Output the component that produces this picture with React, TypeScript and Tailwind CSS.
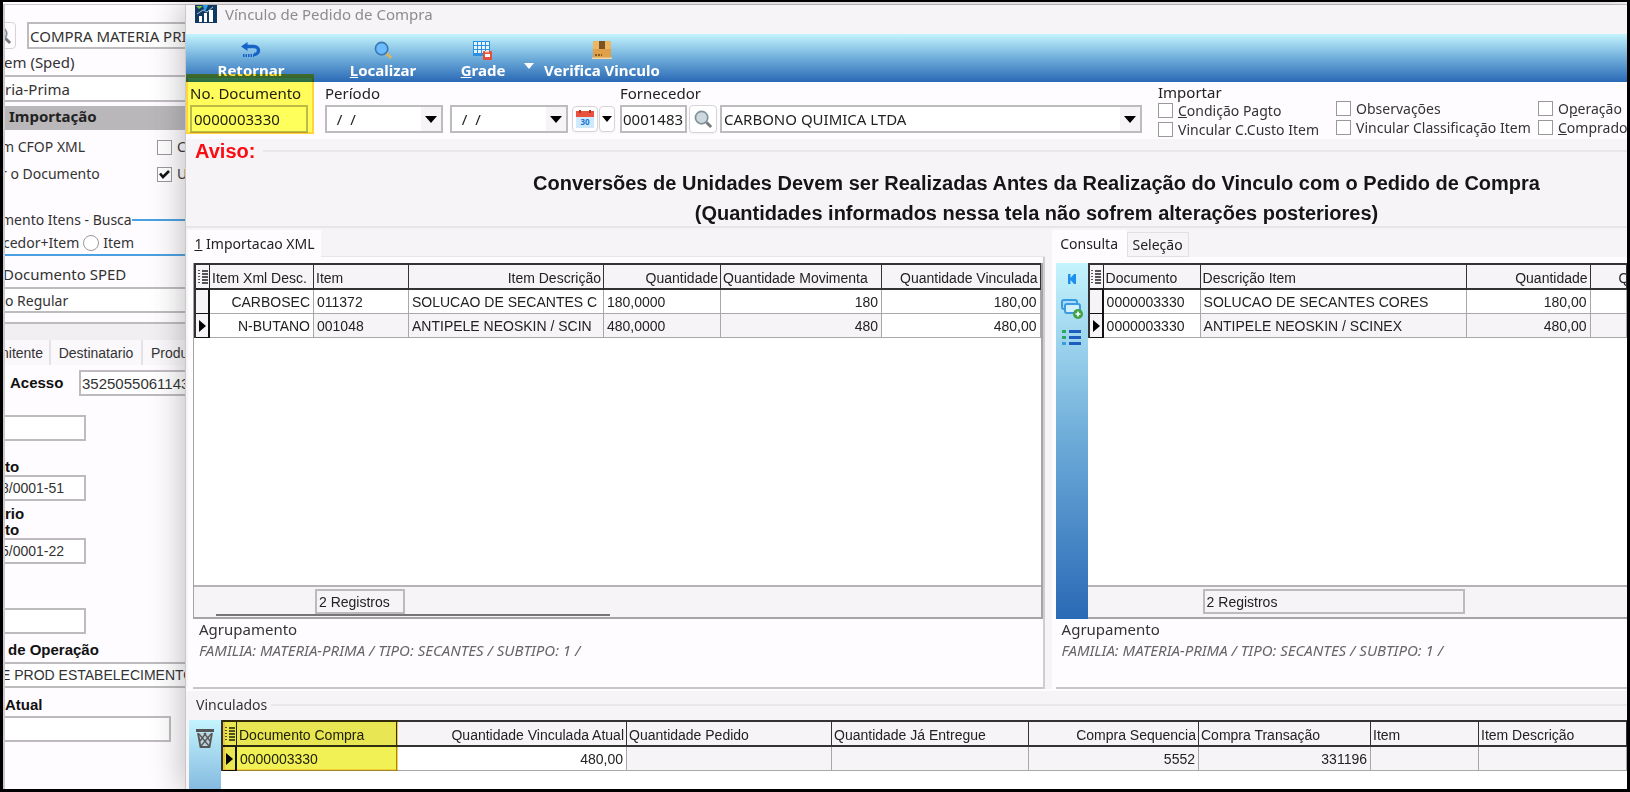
import { useState } from "react";
import type { ReactNode } from "react";
import clsx from "clsx";

type Column = {
  label: string;
  width: string;
  headAlign?: string;
  cellAlign?: string;
  shaded?: boolean;
};

const gridFont = "font-['Liberation_Sans',sans-serif]";
const fieldFont = "font-['Noto_Sans','Open_Sans',sans-serif]";

const itemColumns: Column[] = [
  { label: "Item Xml Desc.", width: "w-[104px]", cellAlign: "text-right" },
  { label: "Item", width: "w-[95px]", shaded: true },
  { label: "Item Descrição", width: "w-[195px]", headAlign: "text-right", shaded: true },
  { label: "Quantidade", width: "w-[117px]", headAlign: "text-right", shaded: true },
  { label: "Quantidade Movimenta", width: "w-[161px]", cellAlign: "text-right", shaded: true },
  { label: "Quantidade Vinculada", width: "w-auto", headAlign: "text-right", cellAlign: "text-right" },
];

const itemRows = [
  ["CARBOSEC", "011372", "SOLUCAO DE SECANTES C", "180,0000", "180", "180,00"],
  ["N-BUTANO", "001048", "ANTIPELE NEOSKIN / SCIN", "480,0000", "480", "480,00"],
];

const orderColumns: Column[] = [
  { label: "Documento", width: "w-[97px]" },
  { label: "Descrição Item", width: "w-[266px]", shaded: true },
  { label: "Quantidade", width: "w-[124px]", headAlign: "text-right", cellAlign: "text-right", shaded: true },
  { label: "Quantidade", width: "w-auto", headAlign: "pl-7 text-left", shaded: true },
];

const orderRows = [
  ["0000003330", "SOLUCAO DE SECANTES CORES", "180,00", ""],
  ["0000003330", "ANTIPELE NEOSKIN / SCINEX", "480,00", ""],
];

const linkedColumns: Column[] = [
  { label: "Documento Compra", width: "w-[160px]" },
  { label: "Quantidade Vinculada Atual", width: "w-[230px]", headAlign: "text-right", cellAlign: "text-right" },
  { label: "Quantidade Pedido", width: "w-[205px]", shaded: true },
  { label: "Quantidade Já Entregue", width: "w-[197px]", shaded: true },
  { label: "Compra Sequencia", width: "w-[170px]", headAlign: "text-right", cellAlign: "text-right", shaded: true },
  { label: "Compra Transação", width: "w-[172px]", cellAlign: "text-right", shaded: true },
  { label: "Item", width: "w-[108px]", shaded: true },
  { label: "Item Descrição", width: "w-auto", shaded: true },
];

const linkedRows = [["0000003330", "480,00", "", "", "5552", "331196", "", ""]];

function GridMenuIcon() {
  return (
    <svg viewBox="0 0 10 14" className="mx-auto h-3.5 w-2.5" fill="#555">
      {[0, 3, 6, 9, 12].map((y) => (
        <g key={y}>
          <rect x="0" y={y} width="2" height="1" />
          <rect x="4" y={y} width="6" height="2" />
        </g>
      ))}
    </svg>
  );
}

function DataGrid({ columns, rows, active }: { columns: Column[]; rows: string[][]; active: number }) {
  return (
    <table className={clsx("w-full table-fixed border-separate border-spacing-0 border-t-2 border-l-2 border-[#333] text-sm text-[#222]", gridFont)}>
      <thead>
        <tr>
          <th className="h-[25px] w-[14px] border-r border-b-2 border-[#222] bg-[#f7f4f8] p-0">
            <GridMenuIcon />
          </th>
          {columns.map((col, i) => (
            <th
              key={i}
              className={clsx(
                "h-[25px] overflow-hidden border-r border-b-2 border-[#333] bg-[#f7f4f8] px-0.5 pt-0.5 pb-0 font-normal whitespace-nowrap",
                col.width,
                col.headAlign ?? "text-left"
              )}
            >
              {col.label}
            </th>
          ))}
        </tr>
      </thead>
      <tbody>
        {rows.map((row, r) => (
          <tr key={r}>
            <td className="h-6 border-r-2 border-b border-[#111] bg-[#f7f4f8] p-0">
              {r === active && (
                <svg viewBox="0 0 8 12" className="mx-auto h-3 w-2" fill="#000">
                  <path d="M1 0l7 6-7 6z" />
                </svg>
              )}
            </td>
            {row.map((cell, c) => (
              <td
                key={c}
                className={clsx(
                  "h-6 overflow-hidden border-r border-b border-[#a9a7aa] px-[3px] py-0 whitespace-nowrap",
                  columns[c].cellAlign,
                  r === active && columns[c].shaded ? "bg-[#f7f4f8]" : "bg-white"
                )}
              >
                {cell}
              </td>
            ))}
          </tr>
        ))}
      </tbody>
    </table>
  );
}

function Combo({ label, value, className }: { label: string; value: string; className: string }) {
  return (
    <div className={clsx("relative", className)}>
      <select
        aria-label={label}
        className={clsx("h-7 w-full appearance-none border-2 border-[#bdbbbe] bg-white px-0.5 text-[15px] text-[#222]", fieldFont)}
      >
        <option>{value}</option>
      </select>
      <span className="pointer-events-none absolute inset-y-0.5 right-0.5 flex w-5 items-center justify-center bg-[#f7f4f8]">
        <svg viewBox="0 0 12 7" className="h-[7px] w-3">
          <path d="M0 0h12L6 7z" />
        </svg>
      </span>
    </div>
  );
}

function Check({ children, defaultChecked }: { children: ReactNode; defaultChecked?: boolean }) {
  return (
    <label className="flex h-[19px] items-center gap-[5px] text-sm whitespace-nowrap text-[#333]">
      <span className="relative flex shrink-0">
        <input
          type="checkbox"
          defaultChecked={defaultChecked}
          className="peer size-[15px] appearance-none border border-[#999] bg-white"
        />
        <svg
          viewBox="0 0 15 15"
          className="pointer-events-none absolute inset-0 hidden size-[15px] peer-checked:block"
          fill="none"
          stroke="#111"
          strokeWidth="2.6"
        >
          <path d="M3 6.5l3 3.5 6-6" />
        </svg>
      </span>
      <span>{children}</span>
    </label>
  );
}

function Lens({ glass, ring, handle }: { glass: string; ring: string; handle: string }) {
  return (
    <svg viewBox="0 0 20 20" className="size-[19px]" fill="none">
      <path d="M13 13l5 5" stroke={handle} strokeWidth="3" />
      <circle cx="8" cy="8" r="6.5" fill={glass} stroke={ring} strokeWidth="1.8" />
    </svg>
  );
}

function ToolButton({ icon, children, className }: { icon: ReactNode; children: ReactNode; className: string }) {
  return (
    <button className={clsx("flex h-full flex-col items-center pt-1.5 text-[15px] leading-5 font-bold whitespace-nowrap text-white", className)}>
      <span className="flex h-5 items-center">{icon}</span>
      <span>{children}</span>
    </button>
  );
}

function Toolbar() {
  return (
    <div className="flex h-12 bg-linear-to-b from-[#c4f4fd] via-[#70aeda] to-[#2a69b5] pl-4">
      <ToolButton
        className="w-[98px]"
        icon={
          <svg viewBox="0 0 20 18" className="h-[18px] w-5" fill="none" stroke="#1763c6">
            <path d="M4 5.500h9a4.500 4 0 0 1 0 8" strokeWidth="3.400" />
            <path d="M0 5.500L6.500 1v9z" fill="#1763c6" stroke="none" />
            <path d="M2 14.500h11" strokeWidth="3" strokeDasharray="1.500 1" />
          </svg>
        }
      >
        Retornar
      </ToolButton>
      <ToolButton className="ml-[34px] w-[98px]" icon={<Lens glass="#6bbcff" ring="#3c79b0" handle="#d8b45c" />}>
        <u>L</u>ocalizar
      </ToolButton>
      <ToolButton
        className="ml-[26px] w-[50px]"
        icon={
          <svg viewBox="0 0 20 20" className="size-5">
            <rect x="0" y="1" width="17" height="15" fill="#2f8fe0" />
            {[2, 6, 10].map((y) =>
              [1, 5, 9, 13].map((x) => <rect key={`${x}-${y}`} x={x} y={y} width="3" height="3" fill="#e8f6ff" />)
            )}
            <rect x="10" y="11" width="9" height="9" rx="1" fill="#e2503a" />
            <rect x="12" y="14" width="5" height="3" fill="#fff" />
            <rect x="12" y="11" width="4" height="1.500" fill="#ffd2c8" />
          </svg>
        }
      >
        <u>G</u>rade
      </ToolButton>
      <button aria-label="Opções da grade" className="ml-[11px] flex w-5 items-center justify-center pt-4">
        <svg viewBox="0 0 10 6" className="h-1.5 w-2.5" fill="#fff">
          <path d="M0 0h10L5 6z" />
        </svg>
      </button>
      <ToolButton
        className="ml-1 w-[118px]"
        icon={
          <svg viewBox="0 0 20 18" className="h-[18px] w-5">
            <rect x="1" y="0" width="18" height="17" rx="1.500" fill="#e0a04a" />
            <rect x="1" y="0" width="18" height="8" rx="1.500" fill="#edb662" />
            <rect x="7" y="0" width="6" height="8" fill="#7c5423" />
            <path d="M3 14h7" stroke="#8a5a22" strokeWidth="2" strokeDasharray="2 1" />
            <rect x="0" y="16.500" width="20" height="1.500" fill="#f5d6a0" />
          </svg>
        }
      >
        Verifica Vinculo
      </ToolButton>
    </div>
  );
}

function FilterBar() {
  const smallButton = "flex items-center justify-center rounded border border-[#d6d4d7] bg-white shadow-xs";
  return (
    <div className="flex h-[57px] bg-[#fffcff] pl-1">
      <div className="relative w-[135px]">
        <label htmlFor="documento" className="block h-[23px] text-[15px] leading-[22px] text-[#222]">
          No. Documento
        </label>
        <input
          id="documento"
          defaultValue="0000003330"
          className="h-7 w-[118px] border-2 border-[#bdbbbe] bg-white px-0.5 text-[15px] text-[#222]"
        />
        <div className="pointer-events-none absolute -top-2 -left-1 h-[60px] w-32 border-2 border-t-4 border-[#ffd83a] bg-[#ffff5c] mix-blend-multiply" />
      </div>
      <div>
        <span className="block h-[23px] text-[15px] leading-[22px] text-[#222]">Período</span>
        <div className="flex items-center">
          <Combo label="Período inicial" value="&nbsp; /&nbsp; /" className="w-[118px]" />
          <Combo label="Período final" value="&nbsp; /&nbsp; /" className="ml-[7px] w-[118px]" />
          <button aria-label="Calendário" className={clsx("ml-1 h-[26px] w-[26px]", smallButton)}>
            <svg viewBox="0 0 18 18" className="size-[18px]">
              <rect x="0" y="1" width="18" height="6" fill="#e8513d" />
              <rect x="0" y="7" width="18" height="11" fill="#cfe9fd" />
              <path d="M4 0v3M14 0v3" stroke="#b9301f" strokeWidth="2" />
              <text x="9" y="15" textAnchor="middle" fontSize="8" fontWeight="700" fill="#1976d2">
                30
              </text>
            </svg>
          </button>
          <button aria-label="Opções de período" className={clsx("ml-px h-[26px] w-4", smallButton)}>
            <svg viewBox="0 0 10 6" className="h-1.5 w-2.5">
              <path d="M0 0h10L5 6z" />
            </svg>
          </button>
        </div>
      </div>
      <div className="ml-[5px] min-w-0">
        <label htmlFor="fornecedor" className="block h-[23px] text-[15px] leading-[22px] text-[#222]">
          Fornecedor
        </label>
        <div className="flex items-center">
          <input
            id="fornecedor"
            defaultValue="0001483"
            className="h-7 w-[67px] border-2 border-[#bdbbbe] bg-white px-px text-[15px] text-[#222]"
          />
          <button aria-label="Pesquisar fornecedor" className={clsx("ml-0.5 h-7 w-7", smallButton)}>
            <Lens glass="#cdd9de" ring="#83929a" handle="#77797c" />
          </button>
          <Combo label="Nome do fornecedor" value="CARBONO QUIMICA LTDA" className="ml-[3px] w-[422px]" />
        </div>
      </div>
      <fieldset className="ml-4 min-w-0 flex-1">
        <legend className="h-[19px] text-[15px] leading-5 text-[#222]">Importar</legend>
        <div className="flex">
          <div className="w-[178px] shrink-0">
            <Check>
              <u>C</u>ondição Pagto
            </Check>
            <Check>Vincular C.Custo Item</Check>
          </div>
          <div className="-mt-0.5 w-[202px] shrink-0">
            <Check>Observações</Check>
            <Check>Vincular Classificação Item</Check>
          </div>
          <div className="-mt-0.5 shrink-0">
            <Check>
              O<u>p</u>eração
            </Check>
            <Check>
              <u>C</u>omprador
            </Check>
          </div>
        </div>
      </fieldset>
    </div>
  );
}

function Agrupamento() {
  return (
    <div className="h-[70px] border-b-2 border-[#c9c6ca] pl-1.5 text-[#333]">
      <p className="text-[15px] leading-5">Agrupamento</p>
      <p className="text-[15px] leading-[22px] text-[#666] italic">FAMILIA: MATERIA-PRIMA / TIPO: SECANTES / SUBTIPO: 1 /</p>
    </div>
  );
}

function ItemsPanel() {
  return (
    <section className="flex w-3/5 min-w-0 flex-col pr-1.5 pl-0.5">
      <div className="flex h-[29px] pt-0.5">
        <button className="w-[133px] bg-[#fffcff] text-sm text-[#222]">
          <u>1</u> Importacao XML
        </button>
        <div className="flex-1 border-b border-[#e8e5e9]" />
      </div>
      <div className="flex flex-1 flex-col border-r-2 border-[#d0cdd1] bg-[#fffcff] pt-1.5 pl-[5px]">
        <div className="flex h-[356px] flex-col border-r-2 border-b-2 border-l border-[#a5a3a6] bg-white">
          <DataGrid columns={itemColumns} rows={itemRows} active={1} />
          <div className="mt-auto h-8 border-t-2 border-[#b5b3b6] bg-[#f7f4f8] pt-0.5">
            <div className="ml-[121px] h-[25px] w-[90px] border-2 border-[#bcbabd] px-0.5 text-sm leading-[22px] text-[#222]">
              <span className={gridFont}>2 Registros</span>
            </div>
            <div className="ml-[22px] h-0.5 w-[394px] bg-[#777]" />
          </div>
        </div>
        <Agrupamento />
      </div>
    </section>
  );
}

function OrdersPanel() {
  const [tab, setTab] = useState("Consulta");
  return (
    <section className="flex w-2/5 min-w-0 flex-col overflow-hidden pl-px">
      <div className="flex h-[29px] items-end">
        {["Consulta", "Seleção"].map((name) => (
          <button
            key={name}
            onClick={() => setTab(name)}
            className={clsx(
              "text-sm text-[#222]",
              tab === name ? "h-[27px] w-[75px] bg-[#fffcff]" : "h-[25px] w-[62px] border border-[#e3e0e4]"
            )}
          >
            {name}
          </button>
        ))}
      </div>
      <div className="flex flex-1 flex-col bg-[#fffcff] pt-1.5 pl-1">
        <div className="flex h-[356px]">
          <div className="flex w-8 shrink-0 flex-col items-center gap-2.5 bg-linear-to-b from-[#c4f4fd] via-[#6cabd8] to-[#2a69b5] pt-1.5">
            <button aria-label="Primeiro registro">
              <svg viewBox="0 0 20 20" className="size-5" fill="#1f8fee">
                <path d="M6 5h2.500v4L12 5h2v10h-2l-3.500-4v4H6z" />
              </svg>
            </button>
            <button aria-label="Adicionar">
              <svg viewBox="0 0 22 20" className="h-5 w-[22px]" fill="none">
                <rect x="1" y="1" width="15" height="9" rx="2" fill="#a9dcf8" stroke="#3a9be0" strokeWidth="2" />
                <rect x="4" y="5" width="15" height="9" rx="2" fill="#d2effc" stroke="#3a9be0" strokeWidth="2" />
                <circle cx="17" cy="15" r="5" fill="#3fa345" />
                <path d="M17 12.500v5M14.500 15h5" stroke="#fff" strokeWidth="1.600" />
              </svg>
            </button>
            <button aria-label="Lista">
              <svg viewBox="0 0 20 18" className="h-[18px] w-5">
                <rect x="0" y="1" width="4" height="3" fill="#2aa860" />
                <rect x="0" y="7" width="4" height="3" fill="#2aa860" />
                <rect x="0" y="13" width="4" height="3" fill="#3a9be0" />
                <path d="M7 2.500h12M7 8.500h12M7 14.500h12" stroke="#1c5dbd" strokeWidth="3" />
              </svg>
            </button>
          </div>
          <div className="flex min-w-0 flex-1 flex-col border-b-2 border-[#a5a3a6] bg-white">
            <DataGrid columns={orderColumns} rows={orderRows} active={1} />
            <div className="mt-auto h-8 border-t-2 border-[#b5b3b6] bg-[#f7f4f8] pt-0.5">
              <div className="ml-[115px] h-[25px] w-[262px] border-2 border-[#bcbabd] px-0.5 text-sm leading-[22px] text-[#222]">
                <span className={gridFont}>2 Registros</span>
              </div>
            </div>
          </div>
        </div>
        <Agrupamento />
      </div>
    </section>
  );
}

function LinkedPanel() {
  return (
    <section className="flex flex-1 flex-col border-t-2 border-[#fffcff] pt-[3px]">
      <div className="flex h-[22px] items-center">
        <span className="ml-2.5 text-sm text-[#333]">Vinculados</span>
        <div className="ml-1 h-0.5 flex-1 bg-[#eae7eb]" />
      </div>
      <div className="mt-1 flex flex-1 pl-[3px]">
        <div className="flex w-8 shrink-0 justify-center bg-linear-to-b from-[#c4f4fd] to-[#86bbe0] pt-2">
          <button aria-label="Excluir" className="h-5">
            <svg viewBox="0 0 20 19" className="h-[19px] w-5" fill="none" stroke="#555">
              <path d="M1 1.500h18" strokeWidth="3" />
              <path d="M3 4l2.500 14h9L17 4" fill="#bcd3dc" strokeWidth="1.800" />
              <path d="M4 5l10 12M9 4l6 8M16 5L6 17M11 4l-6 8" strokeWidth="1.300" />
            </svg>
          </button>
        </div>
        <div className="relative min-w-0 flex-1 bg-white">
          <DataGrid columns={linkedColumns} rows={linkedRows} active={0} />
          <div className="pointer-events-none absolute top-0 left-0.5 h-[51px] w-[175px] border-2 border-[#f5cf35] bg-[#f1f155] mix-blend-multiply" />
        </div>
      </div>
    </section>
  );
}

function LinkDialog() {
  return (
    <main className="z-10 flex min-w-0 flex-1 flex-col overflow-hidden border-l border-[#c9c7ca] bg-[#f7f4f8] shadow-[-2px_0_28px_2px_rgba(60,60,60,0.3)]">
      <header className="flex h-[29px] gap-2 pl-[9px]">
        <svg viewBox="0 0 22 18" className="h-[18px] w-[22px]">
          <rect width="22" height="18" fill="#12395f" />
          <path d="M4 11h3v6H4zM9 8h3v9H9zM14 5h4v12h-4z" fill="#fff" />
          <path d="M1 1h7l-4 3z" fill="#7cc043" />
          <path d="M8 0h5l-2 5H9z" fill="#2b9df0" />
          <path d="M2 9l6-4 4 2 6-5" stroke="#9cc8ea" fill="none" />
        </svg>
        <h1 className="h-[18px] text-[15px] leading-[18px] text-[#8d8b8e]">Vínculo de Pedido de Compra</h1>
      </header>
      <Toolbar />
      <FilterBar />
      <section className="h-[89px] border-b-2 border-[#e8e5e9]">
        <div className="flex h-[23px] items-center">
          <h2 className={clsx("ml-[9px] text-xl font-bold text-[#fb0d12]", gridFont)}>Aviso:</h2>
          <div className="ml-2 h-0.5 flex-1 bg-[#eae7eb]" />
        </div>
        <div className={clsx("ml-[260px] pt-1.5 text-center text-xl leading-[30px] font-bold text-[#151515]", gridFont)}>
          <p>Conversões de Unidades Devem ser Realizadas Antes da Realização do Vinculo com o Pedido de Compra</p>
          <p>(Quantidades informados nessa tela não sofrem alterações posteriores)</p>
        </div>
      </section>
      <div className="flex">
        <ItemsPanel />
        <OrdersPanel />
      </div>
      <LinkedPanel />
    </main>
  );
}

function BackgroundForm() {
  const box = clsx("h-[26px] border-2 border-[#bdbbbe] bg-white text-[#333]", gridFont);
  const bold = clsx("text-[15px] font-bold text-[#111]", gridFont);
  return (
    <aside className="w-[180px] shrink-0 overflow-hidden bg-[#fffcff] whitespace-nowrap text-[#333]">
      <div className="mt-[17px] flex w-[240px]">
        <button aria-label="Pesquisar" className="-ml-4 flex h-[27px] w-[27px] items-center justify-center rounded border border-[#d6d4d7]">
          <Lens glass="#cdd9de" ring="#83929a" handle="#77797c" />
        </button>
        <input
          aria-label="Operação"
          defaultValue="COMPRA MATERIA PRIMA"
          className="ml-[11px] h-[27px] w-52 border-2 border-[#bdbbbe] bg-white px-px text-[15px]"
        />
      </div>
      <label htmlFor="sped" className="-ml-px block h-[26px] text-[15px] leading-[26px]">
        em (Sped)
      </label>
      <input id="sped" defaultValue="ria-Prima" className="block h-[27px] w-full border-y-2 border-[#bdbbbe] bg-white text-[15px]" />
      <h2 className="mt-1 h-6 bg-[#b9b7ba] pl-1 text-[15px] leading-5 font-bold text-[#222]">Importação</h2>
      <div className="flex h-[34px] items-center">
        <span className="-ml-1 w-[156px] shrink-0 text-sm">m CFOP XML</span>
        <Check>C</Check>
      </div>
      <div className="flex h-5 items-center">
        <span className="-ml-1 w-[156px] shrink-0 text-sm">r o Documento</span>
        <Check defaultChecked>U</Check>
      </div>
      <div className="mt-[26px] flex h-5 items-center">
        <span className="-ml-1 text-sm">mento Itens - Busca</span>
        <div className="h-0.5 flex-1 bg-[#4aa0e0]" />
      </div>
      <div className="mt-0.5 flex h-6 items-center border-b-2 border-[#4aa0e0]">
        <span className="-ml-0.5 text-sm">cedor+Item</span>
        <label className="ml-1 flex items-center gap-1 text-sm">
          <input type="radio" name="busca" className="size-4 appearance-none rounded-full border border-[#999] bg-white" />
          Item
        </label>
      </div>
      <label htmlFor="docsped" className="-ml-0.5 block h-[31px] pt-1 text-[15px] leading-7">
        Documento SPED
      </label>
      <input id="docsped" defaultValue="o Regular" className="block h-[26px] w-full border-y-2 border-[#bdbbbe] bg-white text-sm" />
      <div className={clsx("mt-[9px] flex items-end border-t-2 border-[#bdbbbe] bg-[#f1eff2] pt-4 text-sm", gridFont)}>
        <button className="h-[25px] w-[46px] shrink-0 border-r-2 border-[#e5e2e6] bg-[#faf8fb] text-left">
          <span className="-ml-1">nitente</span>
        </button>
        <button className="h-[25px] w-[92px] shrink-0 border-r-2 border-[#e5e2e6] bg-[#faf8fb]">Destinatario</button>
        <button className="h-[25px] flex-1 bg-[#faf8fb] pl-2 text-left">Produtos</button>
      </div>
      <div className="mt-[5px] flex w-[260px] items-center">
        <label htmlFor="acesso" className={clsx("w-[74px] pl-[5px]", bold)}>
          Acesso
        </label>
        <input id="acesso" defaultValue="35250550611439" className={clsx("w-[180px] px-px text-[15px]", box)} />
      </div>
      <input aria-label="Série" className={clsx("mt-[19px] block w-[81px] border-l-0 text-sm", box)} />
      <label htmlFor="cnpj" className={clsx("mt-[15px] block h-[19px] leading-[22px]", bold)}>
        to
      </label>
      <input id="cnpj" defaultValue="8/0001-51" className={clsx("-ml-1 block w-[85px] border-l-0 text-sm", box)} />
      <label htmlFor="dest" className={clsx("mt-[5px] block h-8 leading-4", bold)}>
        rio
        <br />
        to
      </label>
      <input id="dest" defaultValue="5/0001-22" className={clsx("-ml-1 block w-[85px] border-l-0 text-sm", box)} />
      <input aria-label="Número" className={clsx("mt-[44px] block w-[81px] border-l-0 text-sm", box)} />
      <label htmlFor="natureza" className={clsx("mt-1 block h-6 pl-[3px] leading-6", bold)}>
        de Operação
      </label>
      <input id="natureza" defaultValue="E PROD ESTABELECIMENTO" className={clsx("-ml-1 block w-[224px] border-l-0 text-sm", box)} />
      <label htmlFor="atual" className={clsx("mt-1.5 block h-[22px] leading-[22px]", bold)}>
        Atual
      </label>
      <input id="atual" className={clsx("block w-[166px] border-l-0 text-sm", box)} />
    </aside>
  );
}

export default function App() {
  return (
    <div className={clsx("flex min-h-screen w-full overflow-hidden border-2 border-r-[3px] border-b-[3px] border-l-[3px] border-black bg-[#fffcff] pt-0.5", fieldFont)}>
      <div className="flex min-w-0 flex-1 border-t border-l-2 border-[#cbc9cd]">
        <BackgroundForm />
        <LinkDialog />
      </div>
    </div>
  );
}
